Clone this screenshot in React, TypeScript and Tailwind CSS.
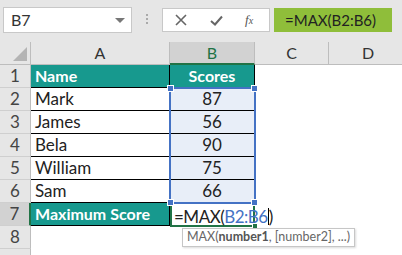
const rows = [
  { n: 1, a: "Name", b: "Scores", head: true },
  { n: 2, a: "Mark", b: "87" },
  { n: 3, a: "James", b: "56" },
  { n: 4, a: "Bela", b: "90" },
  { n: 5, a: "William", b: "75" },
  { n: 6, a: "Sam", b: "66" },
];

function Handle({ className }: { className: string }) {
  return <div className={`absolute w-[7px] h-[7px] bg-[#4472c4] border border-white ${className}`} />;
}

export default function App() {
  return (
    <div className="w-[402px] h-[255px] overflow-hidden bg-white relative text-[#222]" style={{ fontFamily: "Lato, 'Liberation Sans', sans-serif" }}>
      {/* formula bar */}
      <div className="h-[42px] bg-[#e6e6e6] flex items-start pt-[7px]">
        <div className="ml-[3px] w-[129px] h-[26px] bg-white border border-[#c8c8c8] flex items-center justify-between pl-[7px] pr-[6px]">
          <span className="text-[16px] text-[#333]">B7</span>
          <span className="w-0 h-0 border-l-[5px] border-r-[5px] border-t-[5px] border-l-transparent border-r-transparent border-t-[#777]" />
        </div>
        <div className="ml-[14px] mt-[7px] flex flex-col gap-[2px]">
          <span className="w-[2px] h-[2px] bg-[#aaa]" />
          <span className="w-[2px] h-[2px] bg-[#aaa]" />
          <span className="w-[2px] h-[2px] bg-[#aaa]" />
        </div>
        <div className="ml-[14px] mt-[1px] w-[108px] h-[24px] bg-white border border-[#c8c8c8] flex items-center">
          <svg width="12" height="12" viewBox="0 0 12 12" className="ml-[12px]">
            <path d="M1 1L11 11M11 1L1 11" stroke="#666" strokeWidth="1.6" />
          </svg>
          <svg width="13" height="11" viewBox="0 0 13 11" className="ml-[23px]">
            <path d="M1 6L5 9.5L12 1.5" stroke="#666" strokeWidth="2" fill="none" />
          </svg>
          <span className="ml-[22px] text-[13px] italic text-[#555]" style={{ fontFamily: "'Liberation Serif', serif" }}>f<span className="text-[10px]">x</span></span>
        </div>
        <div className="ml-[4px] mt-[1px] w-[118px] h-[24px] bg-[#8fbe3a] flex items-center pl-[11px] text-[15px] text-[#222]">
          =MAX(B2:B6)
        </div>
      </div>

      {/* sheet */}
      <div className="grid grid-cols-[31px_139px_85px_74px_1fr] grid-rows-[23px_repeat(9,23px)]">
        {/* header row */}
        <div className="bg-[#e6e6e6] border-r border-b border-[#bdbdbd] relative">
          <span className="absolute right-[3px] bottom-[3px] w-0 h-0" style={{ borderBottom: "14px solid #b4b4b4", borderLeft: "14px solid transparent" }} />
        </div>
        <div className="bg-[#e6e6e6] border-r border-b border-[#bdbdbd] flex items-center justify-center text-[16px] text-[#333]">A</div>
        <div className="bg-[#d2d2d2] border-r border-b-2 border-r-[#bdbdbd] border-b-[#217346] flex items-center justify-center text-[16px] text-[#217346]">B</div>
        <div className="bg-[#e6e6e6] border-r border-b border-[#bdbdbd] flex items-center justify-center text-[16px] text-[#333]">C</div>
        <div className="bg-[#e6e6e6] border-b border-[#bdbdbd] flex items-center pl-[33px] text-[16px] text-[#333]">D</div>

        {rows.map((r) => (
          <div key={r.n} className="contents">
            <div className="bg-[#e6e6e6] border-r border-b border-[#cfcfcf] border-r-[#bdbdbd] flex items-center justify-center text-[17px] text-[#444]">{r.n}</div>
            <div className={`border-r border-b border-black flex items-center pl-[4px] ${r.head ? "bg-[#17998e] text-white font-bold text-[16px]" : "text-[17px]"}`}>{r.a}</div>
            <div className={`border-r border-b border-black flex items-center justify-center ${r.head ? "bg-[#17998e] text-white font-bold text-[16px]" : "bg-[#e8eef8] text-[17px]"}`}>{r.b}</div>
            <div />
            <div />
          </div>
        ))}

        {/* row 7 */}
        <div className="bg-[#d2d2d2] border-r-2 border-b border-[#cfcfcf] border-r-[#217346] flex items-center justify-center text-[17px] text-[#444]">7</div>
        <div className="bg-[#17998e] text-white font-bold border-r border-b border-black flex items-center pl-[4px] text-[16px]">Maximum Score</div>
        <div className="relative">
          <div className="absolute inset-x-0 -top-[1px] h-[25px] border-2 border-[#217346] bg-white z-10" />
          <span className="absolute -right-[3px] bottom-[-3px] w-[6px] h-[6px] bg-[#217346] border border-white z-20" />
        </div>
        <div />
        <div />

        {/* rows 8-9 */}
        <div className="bg-[#e6e6e6] border-r border-b border-[#cfcfcf] border-r-[#bdbdbd] flex items-center justify-center text-[17px] text-[#444]">8</div>
        <div className="col-span-4" />
        <div className="bg-[#e6e6e6] border-r border-[#bdbdbd]" />
        <div className="col-span-4" />
      </div>

      {/* selection outline B2:B6 */}
      <div className="absolute left-[169px] top-[87px] w-[87px] h-[117px] border-2 border-[#4472c4] pointer-events-none z-20">
        <Handle className="-left-[4px] -top-[4px]" />
        <Handle className="-right-[4px] -top-[4px]" />
        <Handle className="-left-[4px] -bottom-[4px]" />
        <Handle className="-right-[4px] -bottom-[4px]" />
      </div>

      {/* in-cell editor text */}
      <div className="absolute left-[174px] top-[205px] h-[23px] flex items-center whitespace-nowrap text-[17px] tracking-[-0.5px] z-30">
        =MAX(<span className="text-[#4472c4]">B2:B6</span><span className="w-px h-[17px] bg-black" />)
      </div>

      {/* tooltip */}
      <div className="absolute left-[182px] top-[228px] h-[19px] px-[4px] bg-white border border-[#c6c6c6] shadow-[1px_1px_2px_rgba(0,0,0,0.15)] flex items-center text-[12.5px] text-[#666] whitespace-nowrap z-30">
        MAX(<b className="text-[#555]">number1</b>, [number2], ...)
      </div>
    </div>
  );
}
